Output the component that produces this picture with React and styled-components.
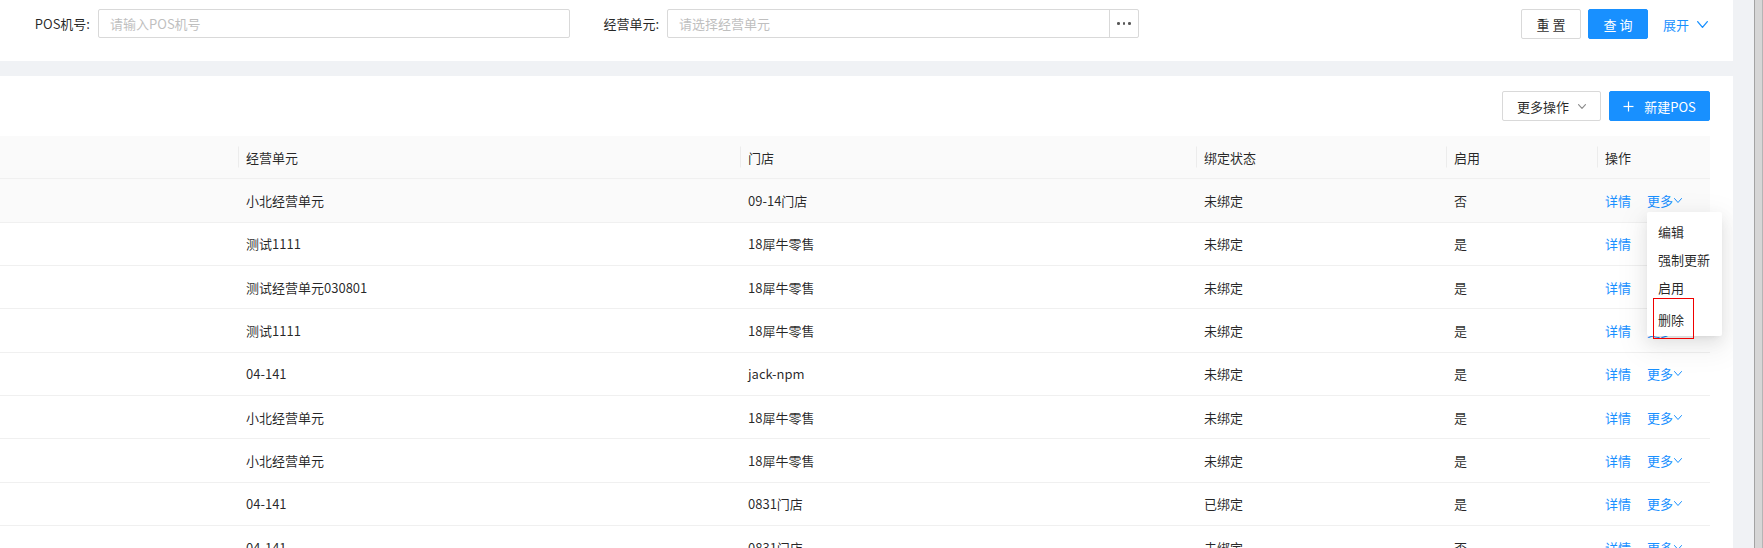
import React from 'react';
import styled, { createGlobalStyle } from 'styled-components';

const Global = createGlobalStyle`
  * { box-sizing: border-box; }
  html, body { margin: 0; padding: 0; overflow: hidden; background: #f0f2f5; }
  body {
    font-family: "Noto Sans CJK SC", "Noto Sans", sans-serif;
    font-size: 13px;
    color: rgba(0, 0, 0, 0.85);
  }
`;

const Page = styled.div`
  display: flex;
  width: 1763px;
  height: 548px;
  overflow: hidden;
`;

const Main = styled.div`
  flex: 1;
  display: flex;
  flex-direction: column;
  gap: 15px;
  padding-right: 21px;
  background: #f0f2f5;
  min-width: 0;
`;

const ScrollStrip = styled.div`
  width: 9px;
  background: #d6d6d6;
  border-left: 1px solid #a3a3a3;
  border-right: 1px solid #b5b5b5;
`;

const SearchPanel = styled.div`
  height: 61px;
  flex: none;
  background: #fff;
  display: flex;
  align-items: flex-start;
  padding: 9px 25px 0 0;
`;

const FormItem = styled.div`
  display: flex;
  align-items: center;
  height: 29px;
`;

const Label = styled.label`
  width: ${(p) => p.w}px;
  text-align: right;
  padding-right: 8px;
  white-space: nowrap;
  color: rgba(0, 0, 0, 0.85);
`;

const TextInput = styled.input`
  width: ${(p) => p.w}px;
  height: 29px;
  border: 1px solid #d9d9d9;
  border-radius: 2px;
  padding: 0 11px;
  font: inherit;
  font-size: 13px;
  color: rgba(0, 0, 0, 0.85);
  outline: none;
  &::placeholder { color: #bfbfbf; }
`;

const Picker = styled.div`
  width: ${(p) => p.w}px;
  height: 29px;
  border: 1px solid #d9d9d9;
  border-radius: 2px;
  display: flex;
  align-items: stretch;
`;

const PickerText = styled.div`
  flex: 1;
  display: flex;
  align-items: center;
  padding: 0 11px;
  color: #bfbfbf;
`;

const PickerAddon = styled.div`
  width: 29px;
  border-left: 1px solid #d9d9d9;
  display: flex;
  align-items: center;
  justify-content: center;
  gap: 3px;
`;

const Dot = styled.span`
  width: 2.5px;
  height: 2.5px;
  border-radius: 50%;
  background: #595959;
`;

const Actions = styled.div`
  margin-left: auto;
  display: flex;
  align-items: center;
  gap: 7px;
`;

const Button = styled.button`
  height: 30px;
  width: ${(p) => p.w || 60}px;
  padding: 0;
  border-radius: 2px;
  border: 1px solid ${(p) => (p.primary ? '#1890ff' : '#d9d9d9')};
  background: ${(p) => (p.primary ? '#1890ff' : '#fff')};
  color: ${(p) => (p.primary ? '#fff' : 'rgba(0,0,0,0.85)')};
  font: inherit;
  font-size: 13px;
  display: inline-flex;
  align-items: center;
  justify-content: center;
  gap: ${(p) => p.gap || 0}px;
  white-space: pre;
  cursor: pointer;
`;

const ExpandLink = styled.a`
  margin-left: 8px;
  color: #1890ff;
  display: inline-flex;
  align-items: center;
  gap: 8px;
  cursor: pointer;
`;

const TablePanel = styled.div`
  flex: 1;
  background: #fff;
  display: flex;
  flex-direction: column;
  padding: 15px 23px 0 0;
  min-height: 0;
  overflow: hidden;
`;

const Toolbar = styled.div`
  display: flex;
  justify-content: flex-end;
  gap: 8px;
  margin-bottom: 15px;
  flex: none;
`;

const TableWrap = styled.div`
  position: relative;
  width: 1710px;
`;

const cols = '238px 502px 456px 250px 151px 113px';

const HeadRow = styled.div`
  display: grid;
  grid-template-columns: ${cols};
  height: 43.33px;
  background: #fafafa;
  border-bottom: 1px solid #f0f0f0;
  align-items: center;
`;

const HeadCell = styled.div`
  position: relative;
  height: 100%;
  display: flex;
  align-items: center;
  padding: 0 8px;
  color: rgba(0, 0, 0, 0.85);
  &::before {
    content: '';
    display: ${(p) => (p.sep ? 'block' : 'none')};
    position: absolute;
    left: 0;
    top: 50%;
    width: 1px;
    height: 21px;
    transform: translateY(-50%);
    background: #ececec;
  }
`;

const Row = styled.div`
  display: grid;
  grid-template-columns: ${cols};
  height: 43.33px;
  border-bottom: 1px solid #f0f0f0;
  background: ${(p) => (p.hover ? '#fafafa' : '#fff')};
  align-items: center;
`;

const Cell = styled.div`
  padding: 0 8px;
  white-space: nowrap;
  overflow: hidden;
`;

const ActionCell = styled.div`
  padding: 0 8px;
  display: flex;
  align-items: center;
  gap: 16px;
  white-space: nowrap;
`;

const Link = styled.a`
  color: #1890ff;
  display: inline-flex;
  align-items: center;
  gap: 1px;
  cursor: pointer;
`;

const Dropdown = styled.div`
  position: absolute;
  left: 1647px;
  top: 76px;
  width: 75px;
  padding: 5px 0 3px;
  background: #fff;
  border-radius: 2px;
  box-shadow: 0 3px 6px -4px rgba(0, 0, 0, 0.12), 0 6px 16px 0 rgba(0, 0, 0, 0.08),
    0 9px 28px 8px rgba(0, 0, 0, 0.05);
  z-index: 5;
`;

const MenuItem = styled.div`
  height: ${(p) => (p.last ? 31.4 : 28.33)}px;
  padding: ${(p) => (p.last ? '4px 0 0 11px' : '0 0 0 11px')};
  display: flex;
  align-items: center;
  white-space: nowrap;
  color: rgba(0, 0, 0, 0.85);
`;

const RedBox = styled.div`
  position: absolute;
  left: 6px;
  top: 86px;
  width: 41px;
  height: 40.5px;
  border: 1.5px solid #f00000;
  pointer-events: none;
`;

const Chevron = ({ w = 8, h = 5, color = 'currentColor', sw = 1.2 }) => (
  <svg width={w} height={h} viewBox={`0 0 ${w} ${h}`} fill="none">
    <polyline
      points={`${sw / 2},${sw / 2} ${w / 2},${h - sw / 2} ${w - sw / 2},${sw / 2}`}
      stroke={color}
      strokeWidth={sw}
      strokeLinecap="round"
      strokeLinejoin="round"
    />
  </svg>
);

const Plus = () => (
  <svg width="11" height="11" viewBox="0 0 11 11" fill="none">
    <line x1="5.5" y1="0.5" x2="5.5" y2="10.5" stroke="#fff" strokeWidth="1.2" />
    <line x1="0.5" y1="5.5" x2="10.5" y2="5.5" stroke="#fff" strokeWidth="1.2" />
  </svg>
);

const rows = [
  ['小北经营单元', '09-14门店', '未绑定', '否'],
  ['测试1111', '18犀牛零售', '未绑定', '是'],
  ['测试经营单元030801', '18犀牛零售', '未绑定', '是'],
  ['测试1111', '18犀牛零售', '未绑定', '是'],
  ['04-141', 'jack-npm', '未绑定', '是'],
  ['小北经营单元', '18犀牛零售', '未绑定', '是'],
  ['小北经营单元', '18犀牛零售', '未绑定', '是'],
  ['04-141', '0831门店', '已绑定', '是'],
  ['04-141', '0831门店', '未绑定', '否'],
];

export default function App() {
  return (
    <>
      <Global />
      <Page>
        <Main>
          <SearchPanel>
            <FormItem>
              <Label w={98}>POS机号:</Label>
              <TextInput w={472} placeholder="请输入POS机号" />
            </FormItem>
            <FormItem>
              <Label w={97}>经营单元:</Label>
              <Picker w={472}>
                <PickerText>请选择经营单元</PickerText>
                <PickerAddon>
                  <Dot />
                  <Dot />
                  <Dot />
                </PickerAddon>
              </Picker>
            </FormItem>
            <Actions>
              <Button w={60}>重 置</Button>
              <Button primary w={60}>查 询</Button>
              <ExpandLink>
                展开
                <Chevron w={11} h={7} sw={1.3} color="#1890ff" />
              </ExpandLink>
            </Actions>
          </SearchPanel>

          <TablePanel>
            <Toolbar>
              <Button w={99} gap={9}>
                更多操作
                <Chevron w={8} h={5} sw={1.1} color="#8c8c8c" />
              </Button>
              <Button primary w={101} gap={10}>
                <Plus />
                新建POS
              </Button>
            </Toolbar>
            <TableWrap>
              <HeadRow>
                <HeadCell />
                <HeadCell sep>经营单元</HeadCell>
                <HeadCell sep>门店</HeadCell>
                <HeadCell sep>绑定状态</HeadCell>
                <HeadCell sep>启用</HeadCell>
                <HeadCell sep>操作</HeadCell>
              </HeadRow>
              {rows.map((r, i) => (
                <Row key={i} hover={i === 0}>
                  <Cell />
                  <Cell>{r[0]}</Cell>
                  <Cell>{r[1]}</Cell>
                  <Cell>{r[2]}</Cell>
                  <Cell>{r[3]}</Cell>
                  <ActionCell>
                    <Link>详情</Link>
                    <Link>
                      更多
                      <Chevron w={8} h={5} sw={1} color="#1890ff" />
                    </Link>
                  </ActionCell>
                </Row>
              ))}
              <Dropdown>
                <MenuItem>编辑</MenuItem>
                <MenuItem>强制更新</MenuItem>
                <MenuItem>启用</MenuItem>
                <MenuItem last>删除</MenuItem>
                <RedBox />
              </Dropdown>
            </TableWrap>
          </TablePanel>
        </Main>
        <ScrollStrip />
      </Page>
    </>
  );
}
